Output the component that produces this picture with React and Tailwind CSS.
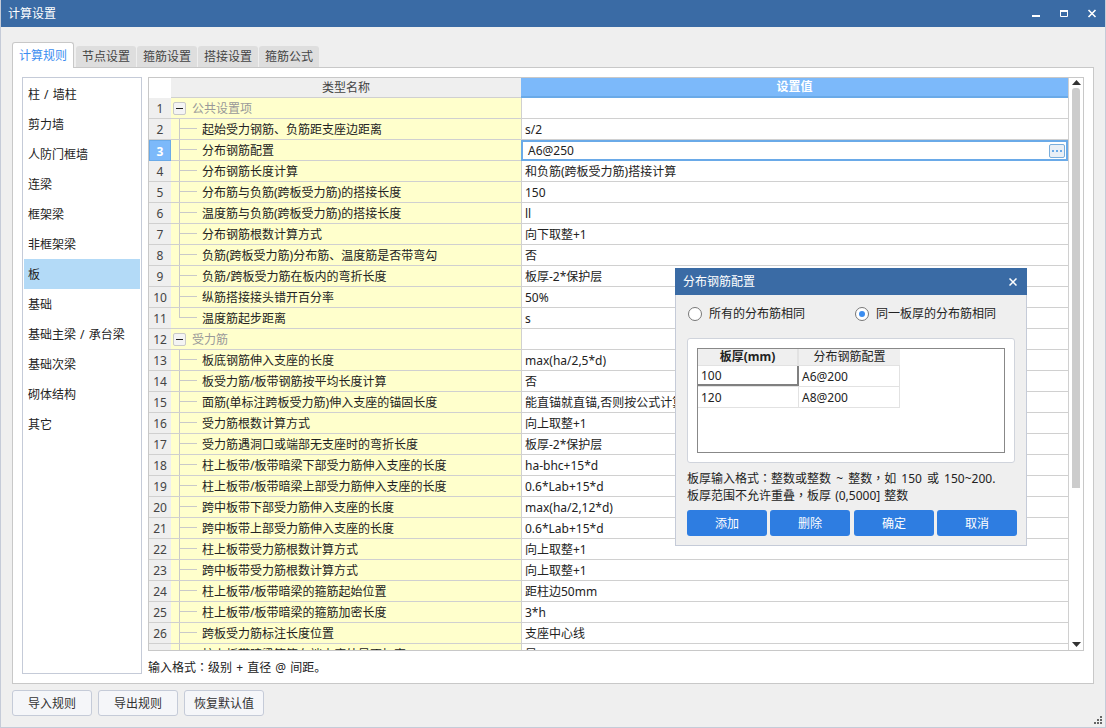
import { useState } from 'react';

const sideItems = ['柱 / 墙柱', '剪力墙', '人防门框墙', '连梁', '框架梁', '非框架梁', '板', '基础', '基础主梁 / 承台梁', '基础次梁', '砌体结构', '其它'];

const tabs = ['计算规则', '节点设置', '箍筋设置', '搭接设置', '箍筋公式'];

// group: 分组行, last: 分组内最后一行
const rows = [
  { name: '公共设置项', value: '', group: true },
  { name: '起始受力钢筋、负筋距支座边距离', value: 's/2' },
  { name: '分布钢筋配置', value: 'A6@250', active: true },
  { name: '分布钢筋长度计算', value: '和负筋(跨板受力筋)搭接计算' },
  { name: '分布筋与负筋(跨板受力筋)的搭接长度', value: '150' },
  { name: '温度筋与负筋(跨板受力筋)的搭接长度', value: 'll' },
  { name: '分布钢筋根数计算方式', value: '向下取整+1' },
  { name: '负筋(跨板受力筋)分布筋、温度筋是否带弯勾', value: '否' },
  { name: '负筋/跨板受力筋在板内的弯折长度', value: '板厚-2*保护层' },
  { name: '纵筋搭接接头错开百分率', value: '50%' },
  { name: '温度筋起步距离', value: 's', last: true },
  { name: '受力筋', value: '', group: true },
  { name: '板底钢筋伸入支座的长度', value: 'max(ha/2,5*d)' },
  { name: '板受力筋/板带钢筋按平均长度计算', value: '否' },
  { name: '面筋(单标注跨板受力筋)伸入支座的锚固长度', value: '能直锚就直锚,否则按公式计算:ha-bhc+15*d' },
  { name: '受力筋根数计算方式', value: '向上取整+1' },
  { name: '受力筋遇洞口或端部无支座时的弯折长度', value: '板厚-2*保护层' },
  { name: '柱上板带/板带暗梁下部受力筋伸入支座的长度', value: 'ha-bhc+15*d' },
  { name: '柱上板带/板带暗梁上部受力筋伸入支座的长度', value: '0.6*Lab+15*d' },
  { name: '跨中板带下部受力筋伸入支座的长度', value: 'max(ha/2,12*d)' },
  { name: '跨中板带上部受力筋伸入支座的长度', value: '0.6*Lab+15*d' },
  { name: '柱上板带受力筋根数计算方式', value: '向上取整+1' },
  { name: '跨中板带受力筋根数计算方式', value: '向上取整+1' },
  { name: '柱上板带/板带暗梁的箍筋起始位置', value: '距柱边50mm' },
  { name: '柱上板带/板带暗梁的箍筋加密长度', value: '3*h' },
  { name: '跨板受力筋标注长度位置', value: '支座中心线' },
  { name: '柱上板带暗梁箍筋在端支座处是否加密', value: '是' },
];

// 居中的全角标点
function Punct({ children }) {
  return <span className="font-['Noto_Sans_CJK_TC',sans-serif]">{children}</span>;
}

function TreeLine({ last }) {
  return (
    <div className="ml-[8px] flex h-full w-[23px] shrink-0 flex-col">
      <div className="h-[10px] w-[18px] border-b border-l border-[#c9c9c9]" />
      {!last && <div className="flex-1 border-l border-[#c9c9c9]" />}
    </div>
  );
}

function GridRow({ row, index }) {
  return (
    <div className="flex h-[21px] shrink-0 text-[#222]">
      {row.active ? (
        <div className="flex w-[22px] shrink-0 items-center justify-center border border-[#6aaae8] bg-[#7cb9fa] pt-[2px] font-bold text-white">
          {index + 1}
        </div>
      ) : (
        <div className="flex w-[22px] shrink-0 items-center justify-center border-b border-[#d0d0d0] bg-[#efefef] pt-[2px] text-[#444]">
          {index + 1}
        </div>
      )}
      <div className="flex w-[350px] shrink-0 items-center border-b border-[#d0d0d0] bg-[#ffffcc]">
        {row.group ? (
          <>
            <div className="ml-[2px] flex h-[13px] w-[13px] items-center justify-center rounded-[2px] border border-[#c9c9c9] bg-[#f4f4f4]">
              <div className="h-[1px] w-[7px] bg-[#222]" />
            </div>
            <span className="ml-[6px] mt-[2px] text-[#999]">{row.name}</span>
          </>
        ) : (
          <>
            <TreeLine last={row.last} />
            <span className="mt-[2px] whitespace-nowrap">{row.name}</span>
          </>
        )}
      </div>
      {row.active ? (
        <div className="flex min-w-0 flex-1 items-center justify-between border-2 border-[#6aaae8] pl-[5px] pr-px">
          <span>{row.value}</span>
          <div className="flex h-[14px] w-[16px] items-center justify-center gap-[2px] rounded-[2px] border border-[#7aaedc] bg-[#e9eff6]">
            <div className="h-[2px] w-[2px] bg-[#6aaae8]" />
            <div className="h-[2px] w-[2px] bg-[#6aaae8]" />
            <div className="h-[2px] w-[2px] bg-[#6aaae8]" />
          </div>
        </div>
      ) : (
        <div className="flex min-w-0 flex-1 items-center overflow-hidden whitespace-nowrap border-b border-l border-[#d0d0d0] pl-[3px] pt-[2px]">
          {row.value}
        </div>
      )}
    </div>
  );
}

function RadioOption({ label, checked, className }) {
  return (
    <div className={`flex items-center gap-[7px] ${className}`}>
      <div className="flex h-[14px] w-[14px] items-center justify-center rounded-full border border-[#777] bg-white">
        {checked && <div className="h-[6px] w-[6px] rounded-full bg-[#3b8df0]" />}
      </div>
      <span>{label}</span>
    </div>
  );
}

function DistributionDialog() {
  return (
    <div className="absolute left-[674px] top-[268px] flex h-[278px] w-[352px] flex-col border-x border-b border-[#c5cbd8] bg-[#efefef] text-[#222]">
      <div className="-mx-px flex h-[27px] shrink-0 items-center justify-between bg-[#3a6ba5] pl-[8px] pr-[10px] text-white">
        <span>分布钢筋配置</span>
        <svg width="8" height="8" viewBox="0 0 8 8" fill="none" stroke="#fff" strokeWidth="1.5">
          <path d="M0.5 0.5l7 7M7.5 0.5l-7 7" />
        </svg>
      </div>
      <div className="mt-[12px] flex h-[14px] items-center pl-[12px]">
        <RadioOption label="所有的分布筋相同" className="w-[167px]" />
        <RadioOption label="同一板厚的分布筋相同" checked />
      </div>
      <div className="ml-[11px] mt-[17px] h-[125px] w-[328px] rounded-[3px] border border-[#d0d4dc] bg-white p-[9px]">
        <div className="h-[105px] border border-[#888] bg-white">
          <div className="flex h-[17px] w-[202px] border-b border-[#e2e2e2] bg-[#efefef]">
            <div className="flex w-[101px] items-center justify-center border-r-2 border-[#e2e2e2] font-bold">板厚(mm)</div>
            <div className="flex flex-1 items-center justify-center">分布钢筋配置</div>
          </div>
          <div className="flex h-[21px] w-[202px] border-b border-[#e2e2e2]">
            <div className="flex w-[101px] items-center border-b-2 border-r-2 border-[#808080] pl-[3px] pt-[2px]">100</div>
            <div className="flex flex-1 items-center border-r border-[#e2e2e2] pl-[3px] pt-[2px]">A6@200</div>
          </div>
          <div className="flex h-[21px] w-[202px] border-b border-[#e2e2e2]">
            <div className="flex w-[101px] items-center border-r border-[#e2e2e2] pl-[3px] pt-[2px]">120</div>
            <div className="flex flex-1 items-center border-r border-[#e2e2e2] pl-[3px] pt-[2px]">A8@200</div>
          </div>
        </div>
      </div>
      <div className="ml-[11px] mt-[7px] leading-[16px]">
        <div className="[word-spacing:2px]">板厚输入格式<Punct>：</Punct>整数或整数 ~ 整数<Punct>，</Punct>如 150 或 150~200.</div>
        <div>板厚范围不允许重叠<Punct>，</Punct>板厚 (0,5000] 整数</div>
      </div>
      <div className="ml-[11px] mt-[6px] flex text-white">
        {['添加', '删除', '确定', '取消'].map((label, i) => (
          <div key={label} className={`flex h-[26px] w-[80px] items-center justify-center rounded-[3px] bg-[#2e7de1] pt-[2px] ${i === 0 ? '' : i === 2 ? 'ml-[4px]' : 'ml-[3px]'}`}>
            {label}
          </div>
        ))}
      </div>
    </div>
  );
}

export default function App() {
  const [activeTab] = useState(0);

  return (
    <div className="relative flex h-[728px] w-[1106px] flex-col overflow-hidden border-x border-b border-[#c5cbd8] bg-[#efefef] font-['Noto_Sans','Noto_Sans_CJK_SC',sans-serif] text-[12px] leading-none text-[#222] [word-spacing:1px]">
      {/* 标题栏 */}
      <div className="-mx-px flex h-[27px] shrink-0 items-center justify-between bg-[#3a6ba5] pl-[8px] text-white">
        <span>计算设置</span>
        <svg width="110" height="27" viewBox="0 0 110 27" fill="none" stroke="#fff">
          <path d="M36 16h8" strokeWidth="2" />
          <path d="M64.5 10.5h7v6h-7z" strokeWidth="1" />
          <path d="M64 11h8" strokeWidth="2" />
          <path d="M92.5 10l7 7M99.5 10l-7 7" strokeWidth="1.6" />
        </svg>
      </div>

      <div className="flex flex-1 flex-col px-[11px] pt-[15px]">
        {/* 页签 */}
        <div className="z-10 -mb-px flex h-[26px] shrink-0 items-end gap-px">
          {tabs.map((tab, i) =>
            i === activeTab ? (
              <div key={tab} className="mr-px flex h-[26px] w-[62px] items-center justify-center rounded-t-[3px] border-x border-t border-[#c8c8c8] bg-white text-[#3b8df0]">
                {tab}
              </div>
            ) : (
              <div key={tab} className="flex h-[22px] w-[60px] items-center justify-center rounded-t-[3px] border-b border-[#c8c8c8] bg-[#dedede] text-[#444]">
                {tab}
              </div>
            )
          )}
        </div>

        <div className="flex h-[617px] w-[1082px] shrink-0 gap-[6px] border border-[#c8c8c8] bg-white pl-[9px] pt-[9px]">
          {/* 左侧构件列表 */}
          <div className="h-[597px] w-[120px] shrink-0 border border-[#c5cbd8] p-px">
            {sideItems.map((item) => (
              <div key={item} className={`flex h-[30px] items-center whitespace-nowrap pl-[4px] pt-[2px] ${item === '板' ? 'bg-[#b3daf7]' : ''}`}>
                {item}
              </div>
            ))}
          </div>

          <div className="flex w-[936px] shrink-0 flex-col">
            {/* 规则表格 */}
            <div className="flex h-[574px] shrink-0 overflow-hidden border border-[#c8c8c8]">
              <div className="flex w-[919px] shrink-0 flex-col overflow-hidden">
                <div className="flex h-[20px] shrink-0">
                  <div className="w-[22px] shrink-0" />
                  <div className="flex w-[350px] shrink-0 items-center justify-center border-b border-[#d0d0d0] bg-[#efefef] text-[#444]">
                    类型名称
                  </div>
                  <div className="flex flex-1 items-center justify-center border-b-2 border-[#6aaae8] bg-[#7cb9fa] font-bold text-white">
                    设置值
                  </div>
                </div>
                {rows.map((row, i) => (
                  <GridRow key={i} row={row} index={i} />
                ))}
              </div>
              <div className="flex flex-1 flex-col items-center border-l border-[#d0d0d0] pt-[1px]">
                <svg width="9" height="5" viewBox="0 0 9 5" className="mt-[1px] shrink-0" fill="#333">
                  <path d="M4.5 0L9 5H0z" />
                </svg>
                <div className="mt-[3px] h-[400px] w-[8px] rounded-t-[3px] bg-[#cccccc]" />
                <div className="flex-1" />
                <svg width="9" height="5" viewBox="0 0 9 5" className="mb-[3px] shrink-0" fill="#333">
                  <path d="M4.5 5L9 0H0z" />
                </svg>
              </div>
            </div>
            <div className="mt-[10px]">输入格式<Punct>：</Punct>级别 + 直径 @ 间距。</div>
          </div>
        </div>

        {/* 底部按钮 */}
        <div className="mt-[6px] flex gap-[6px]">
          {['导入规则', '导出规则', '恢复默认值'].map((label) => (
            <div key={label} className="flex h-[26px] w-[80px] items-center justify-center rounded-[3px] border border-[#c5cbd8] bg-[#f5f6f9] pt-[2px] text-[#333]">
              {label}
            </div>
          ))}
        </div>
      </div>

      {/* 右下角缩放手柄 */}
      <svg width="8" height="8" viewBox="0 0 8 8" fill="#666" className="absolute bottom-[3px] right-[3px]">
        <path d="M6 0h2v2H6zM3 3h2v2H3zM6 3h2v2H6zM0 6h2v2H0zM3 6h2v2H3zM6 6h2v2H6z" />
      </svg>

      <DistributionDialog />
    </div>
  );
}
